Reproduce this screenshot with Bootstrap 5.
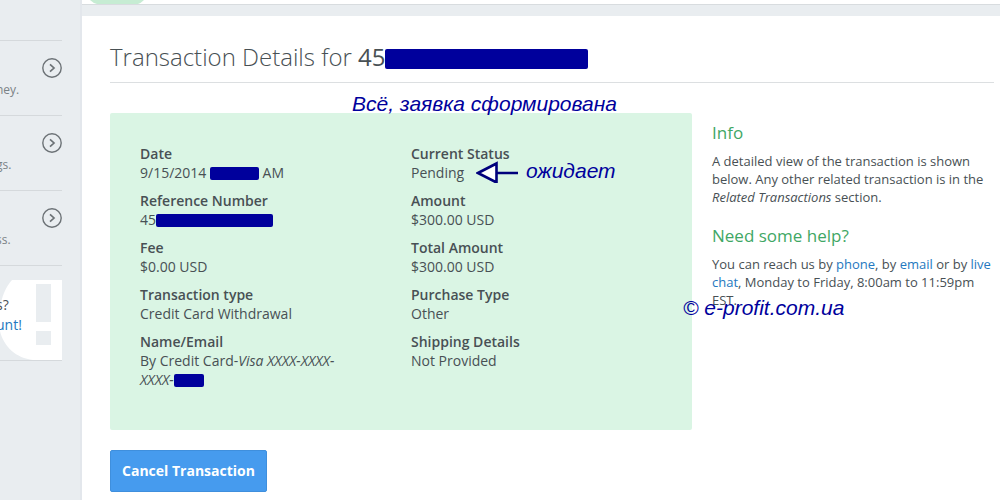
<!DOCTYPE html>
<html lang="en">
<head>
<meta charset="utf-8">
<meta name="viewport" content="width=device-width, initial-scale=1">
<title>Transaction Details</title>
<link href="https://cdn.jsdelivr.net/npm/bootstrap@5.3.0/dist/css/bootstrap.min.css" rel="stylesheet">
<style>
body{background:#e9edf0;color:#485054;font:14px/19px "Open Sans",sans-serif}
a{color:#2478c0;text-decoration:none}
.side{width:82px;padding:40px 18px 0 0;border-right:2px solid #e3e7ec}
.side-item{height:75px;border-top:1px solid #d5d9dc;color:#7b8286;font-size:12px;line-height:16px}
.side-item svg{margin-top:17px}
.side-item span{margin-top:41px}
.side-item span,.promo-text{margin-left:-4px}
.side-end{border-top:1px solid #d5d9dc;height:15px}
.promo{height:81px;border-bottom:1px solid #d5d9dc;line-height:20px;padding-top:15px}
.promo svg{right:0;top:0}
.topbar{height:5px;border-bottom:1px solid #d8dcdf}
.topbar svg{margin-left:8px}
.panel{margin-top:11px;padding:24px 6px 8px 28px}
.title{font-size:24px;line-height:34px;font-weight:300;padding-bottom:8px;margin-bottom:30px;border-bottom:1px solid #dcdfe1}
.title strong{font-weight:400}
.hide-bar{display:inline-block;background:#00009c;border-radius:2px;height:13px;vertical-align:-2px}
.w-title{width:203px;height:20px;vertical-align:-3px}
.w-time{width:49px}.w-ref{width:117px}.w-card{width:30px}
.details{background:#daf5e4;border-radius:2px;padding:31px 30px 32px;gap:20px}
.details dl{flex:1 1 0}
.details dt{font-weight:600}
.details dd{margin-bottom:9px}
.info{width:282px;margin-left:20px;padding-top:10px;font-size:13px;line-height:18px}
.info h2{color:#3fa765;font-size:17px;line-height:20px;margin-bottom:9px}
.info p{margin-bottom:20px}
.btn-cancel{--bs-btn-color:#fff;--bs-btn-bg:#469bee;--bs-btn-border-color:#3f8fdd;--bs-btn-hover-color:#fff;--bs-btn-hover-bg:#398de0;--bs-btn-border-radius:2px;font-size:14px;font-weight:700;line-height:20px;padding:10px 11px;margin-top:20px}
.note{color:#00009c;font:italic 21px/24px "Liberation Sans",Arial,sans-serif;white-space:nowrap}
.note-done{left:242px;top:-21px}
.note-wait{left:366px;top:46px;gap:8px}
.note-site{left:-29px;top:183px}
</style>
</head>
<body>
<div class="d-flex min-vh-100">
  <aside class="side flex-shrink-0 overflow-hidden">
    <div class="side-item d-flex justify-content-between"><span>ney.</span><svg width="20" height="20" viewBox="0 0 20 20" fill="none" stroke="#6c7276" stroke-width="1.4"><circle cx="10" cy="10" r="9.2"/><path d="M8 6.3 12 10l-4 3.7" stroke-width="1.7"/></svg></div>
    <div class="side-item d-flex justify-content-between"><span>gs.</span><svg width="20" height="20" viewBox="0 0 20 20" fill="none" stroke="#6c7276" stroke-width="1.4"><circle cx="10" cy="10" r="9.2"/><path d="M8 6.3 12 10l-4 3.7" stroke-width="1.7"/></svg></div>
    <div class="side-item d-flex justify-content-between"><span>ss.</span><svg width="20" height="20" viewBox="0 0 20 20" fill="none" stroke="#6c7276" stroke-width="1.4"><circle cx="10" cy="10" r="9.2"/><path d="M8 6.3 12 10l-4 3.7" stroke-width="1.7"/></svg></div>
    <div class="side-end"></div>
    <div class="promo position-relative">
      <svg class="position-absolute" width="62" height="80" viewBox="0 0 62 80"><path d="M12 0h50v80H33C13 78-1 62-1 42-1 25 3 10 12 0Z" fill="#fff"/><path d="M36 4h15v38H36zM36 51h15v14H36z" fill="#e9edf0"/></svg>
      <div class="promo-text position-relative">s?<br><a href="#">unt!</a></div>
    </div>
  </aside>
  <div class="flex-grow-1 d-flex flex-column">
    <div class="topbar bg-white overflow-hidden"><svg class="d-block" width="54" height="4" viewBox="0 0 54 4"><path d="M0 0h54Q51 3 48 4H7Q3 3 0 0Z" fill="#c6ecd3"/></svg></div>
    <main class="panel bg-white flex-grow-1">
      <h1 class="title">Transaction Details for <strong>45</strong><span class="hide-bar w-title"></span></h1>
      <div class="d-flex align-items-start">
        <div class="details d-flex flex-grow-1 position-relative">
          <dl class="mb-0">
            <dt>Date</dt><dd>9/15/2014 <span class="hide-bar w-time"></span> AM</dd>
            <dt>Reference Number</dt><dd>45<span class="hide-bar w-ref"></span></dd>
            <dt>Fee</dt><dd>$0.00 USD</dd>
            <dt>Transaction type</dt><dd>Credit Card Withdrawal</dd>
            <dt>Name/Email</dt><dd>By Credit Card-<em>Visa XXXX-XXXX-<br>XXXX-<span class="hide-bar w-card"></span></em></dd>
          </dl>
          <dl class="mb-0">
            <dt>Current Status</dt><dd>Pending</dd>
            <dt>Amount</dt><dd>$300.00 USD</dd>
            <dt>Total Amount</dt><dd>$300.00 USD</dd>
            <dt>Purchase Type</dt><dd>Other</dd>
            <dt>Shipping Details</dt><dd>Not Provided</dd>
          </dl>
          <div class="note note-done position-absolute">Всё, заявка сформирована</div>
          <div class="note note-wait position-absolute d-flex align-items-center"><svg width="42" height="24" viewBox="0 0 42 24" fill="none" stroke="#00007c" stroke-width="2.6"><path d="M2 14 20.500 4.500V23.500ZM20.500 14H42" fill="#fff"/></svg>ожидает</div>
        </div>
        <aside class="info flex-shrink-0 position-relative">
          <h2>Info</h2>
          <p>A detailed view of the transaction is shown below. Any other related transaction is in the <em>Related Transactions</em> section.</p>
          <h2>Need some help?</h2>
          <p>You can reach us by <a href="#">phone</a>, by <a href="#">email</a> or by <a href="#">live chat</a>, Monday to Friday, 8:00am to 11:59pm EST.</p>
          <div class="note note-site position-absolute">© e-profit.com.ua</div>
        </aside>
      </div>
      <button type="button" class="btn btn-cancel">Cancel Transaction</button>
    </main>
  </div>
</div>
<script src="https://cdn.jsdelivr.net/npm/bootstrap@5.3.0/dist/js/bootstrap.bundle.min.js"></script>
</body>
</html>
